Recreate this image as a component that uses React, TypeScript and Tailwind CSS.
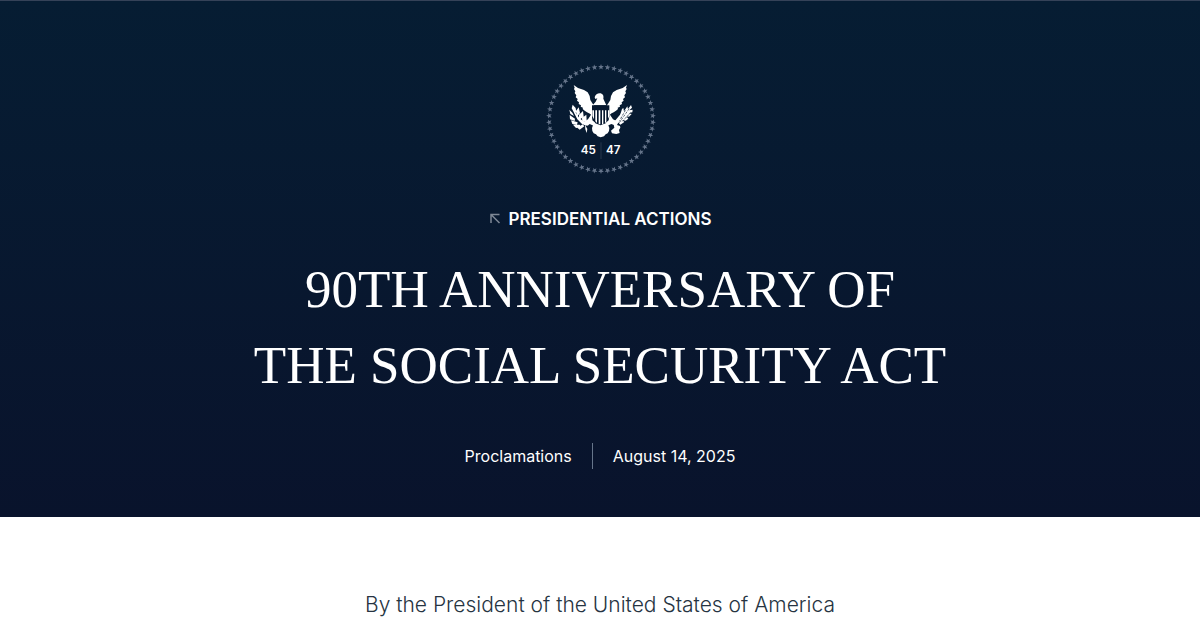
const STAR_COUNT = 50;

function StarRing() {
  return (
    <g fill="#65748a">
      {Array.from({ length: STAR_COUNT }, (_, i) => (
        <path
          key={i}
          d="M183 12l2.2 6 6.4.2-5 4 1.700 6.200-5.300-3.600-5.300 3.600 1.700-6.200-5-4 6.400-.2z"
          transform={`rotate(${(i * 360) / STAR_COUNT} 183 177)`}
        />
      ))}
    </g>
  );
}

function Eagle() {
  return (
    <g fill="#fff">
      {/* wings */}
      <path d="M101 75L114 84L132 90L143 97L149 108L151 120L157 130L164 140L157 152L153 163L141 157L134 152L128 147L129 143L122 140L123 136L116 132L117 127L111 122L113 117L107 112L109 106L104 99L106 94L102 87L104 83Z" />
      <path d="M261 75L248 84L230 90L219 97L213 108L211 120L205 130L198 140L205 152L209 163L221 157L228 152L234 147L233 143L240 140L239 136L246 132L245 127L251 122L249 117L255 112L253 106L258 99L256 94L260 87L258 83Z" />
      {/* shoulders and legs */}
      <path d="M140 146L157 140V181L167 189L161 197L149 192L143 197L133 193L131 186L144 178L153 164Z" />
      <path d="M222 146L206 140V181L196 189L202 197L214 192L222 195L231 190L231 184L219 178L210 164Z" />
      {/* head and neck */}
      <path d="M164 112C166 104 172 100 179 100C188 100 192 107 190 116L199 136H158L167 125L172 115L166 117Z" />
      {/* shield */}
      <path d="M156 136H208V170C205 184 194 192 182 196C169 192 158 183 156 170Z" fill="#07182f" />
      <path d="M157 151H162V178L157 168ZM166 151H171V189L166 184ZM176 151H181V193H176ZM186 151H190V193H186ZM195 151H199V185L195 190ZM204 151H208V168L204 176Z" />
      {/* tail */}
      <path d="M166 190L181 196L198 190L205 196L208 204L207 213L203 220L197 223L192 229L182 232L173 229L168 223L161 220L157 213L156 204L159 196Z" />
      {/* olive branch */}
      <path d="M139 197L126 192L112 178L102 158L106 157L118 174L130 184L146 187Z" />
      <path d="M103 160L95 145L98 134L107 144L109 157ZM97 158L88 149L91 162L102 168ZM111 170L108 153L116 142L120 159ZM105 176L89 165L90 178L104 183ZM117 180L117 164L129 153L131 170ZM113 187L93 181L97 192L111 194ZM127 187L126 174L139 164L140 182ZM119 194L99 194L108 204L124 201ZM128 193L112 203L119 209L133 199ZM135 194L142 207L140 219L136 208Z" />
      {/* arrows */}
      <path d="M220 188L245 158L249 162L231 195L240 198L241 203L237 210L239 219L229 222L216 220L213 212L223 203Z" />
      <path d="M241 163L246 147L250 144L252 154L262 139L264 147L273 135L276 143L268 151L278 149L277 157L266 160L275 162L267 170L259 169L265 176L257 182L247 180L253 186L241 194L233 185L244 181L233 181L244 172Z" />
      <path
        d="M238 188L269 144M247 184L273 157M242 176L256 151"
        fill="none"
        stroke="#07182f"
        strokeWidth="2"
        strokeDasharray="7 4"
      />
    </g>
  );
}

function Emblem() {
  return (
    <svg viewBox="12 9 336 336" className="size-28" role="img" aria-label="45 47">
      <StarRing />
      <Eagle />
      <path d="M183 247V297" stroke="#26364d" strokeWidth="3" />
      <g
        fill="#fff"
        fontFamily="Inter, sans-serif"
        fontSize="35"
        fontWeight="600"
        textAnchor="middle"
      >
        <text x="145" y="283">45</text>
        <text x="220" y="283">47</text>
      </g>
    </svg>
  );
}

function BackArrow() {
  return (
    <svg viewBox="0 0 12 12" className="size-3" fill="none" stroke="#7d8795" strokeWidth="1.500" aria-hidden="true">
      <path d="M2 10V1.500H10.500M2 1.500L10.500 10" />
    </svg>
  );
}

export default function App() {
  return (
    <div className="min-h-screen bg-white font-['Inter',sans-serif]">
      <header className="flex flex-col items-center border-t border-[#354258] bg-linear-to-b from-[#061d33] to-[#09132c] px-6 pt-[62px] pb-12 text-center text-white">
        <a href="#home" aria-label="Home">
          <Emblem />
        </a>

        <a
          href="#presidential-actions"
          className="mt-8 flex items-center gap-2 text-[17px] leading-6 font-semibold uppercase"
        >
          <BackArrow />
          Presidential Actions
        </a>

        <h1 className="mt-5 font-['Liberation_Serif',serif] text-[53px] leading-[76px] uppercase">
          90th Anniversary of
          <br />
          the Social Security Act
        </h1>

        <div className="mt-10 flex items-center text-base leading-[26px]">
          <a href="#proclamations" className="pr-5">
            Proclamations
          </a>
          <time dateTime="2025-08-14" className="border-l border-[#66758a] pl-5">
            August 14, 2025
          </time>
        </div>
      </header>

      <main className="px-6 pt-[73px] text-center">
        <p className="text-[21px] leading-[30px] font-light text-[#263442]">
          By the President of the United States of America
        </p>
      </main>
    </div>
  );
}
